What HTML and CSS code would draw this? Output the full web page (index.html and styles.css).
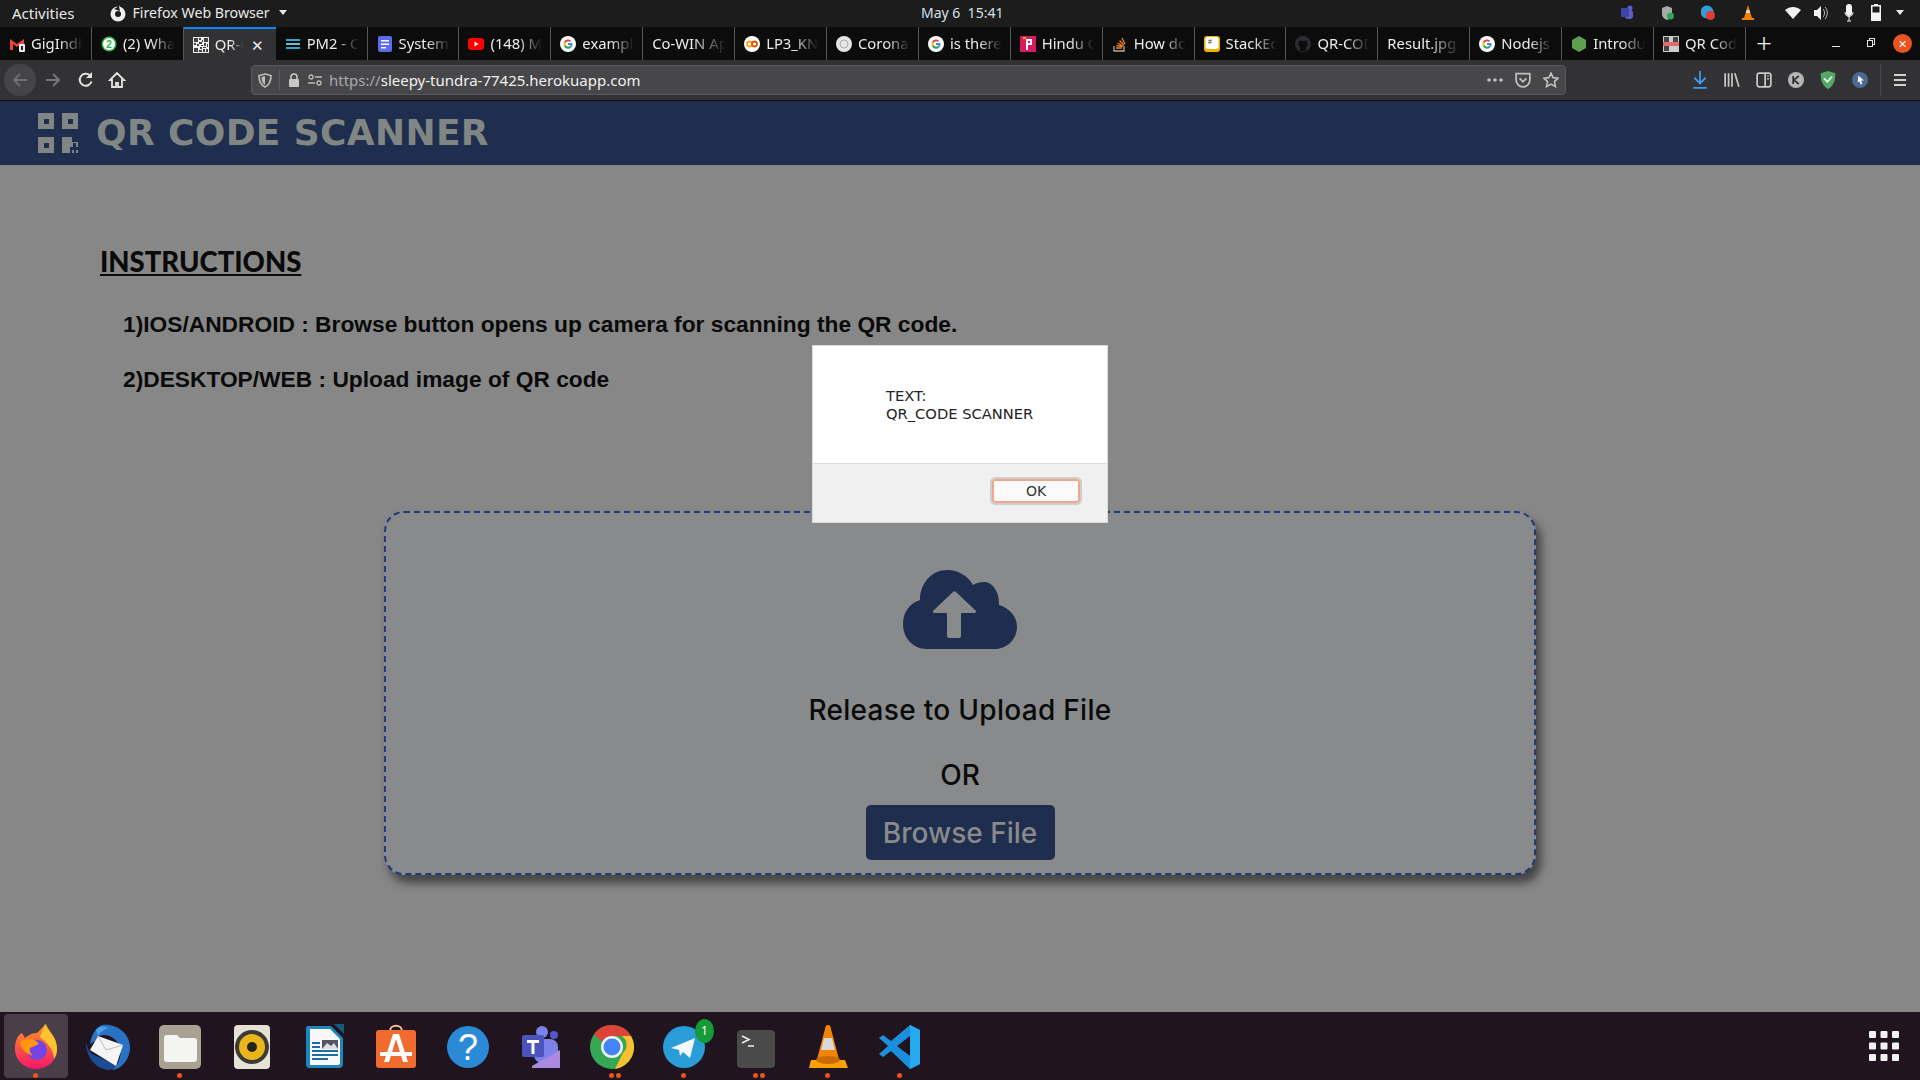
FILE: index.html
```html
<!DOCTYPE html>
<html lang="en">

<head>
    <meta charset="UTF-8">
    <title>QR Code Scanner</title>
    <link rel="stylesheet" href="styles.css">
</head>

<body>
    <div class="screen">
        <div class="topbar">
            <span class="activities">Activities</span>
            <span class="app-menu">
                <svg width="18" height="18" viewBox="0 0 18 18"><circle cx="9" cy="10" r="7.5" fill="#eee"/><circle cx="9" cy="10" r="3" fill="#1c1c1c"/><path d="M10 0c-1 3-3 4-5 5l6 2z" fill="#1c1c1c"/><path d="M10 1c1 2 2 3 4 4l-3 1z" fill="#eee"/></svg>
                Firefox Web Browser
                <i class="caret"></i>
            </span>
            <span class="clock">May 6&nbsp; 15:41</span>
            <span class="tray">
                <svg class="tray-teams" width="14" height="16" viewBox="0 0 14 16"><circle cx="10" cy="3" r="2.5" fill="#5b5fc7"/><rect x="5" y="5" width="8" height="9" rx="3" fill="#5b5fc7"/><rect x="1" y="3" width="8" height="9" rx="1" fill="#3f43a8"/></svg>
                <svg class="tray-shield" width="14" height="16" viewBox="0 0 14 16"><path d="M6 1l5 2v6c0 3-2 5-5 6-3-1-5-3-5-6V3z" fill="#a9a9a9"/><circle cx="9.5" cy="11" r="3.5" fill="#2ea44f"/></svg>
                <svg class="tray-tg" width="14" height="16" viewBox="0 0 14 16"><circle cx="6" cy="7" r="6.5" fill="#2f9ed8"/><circle cx="9.5" cy="10.5" r="4.5" fill="#e53935"/></svg>
                <svg class="tray-vlc" width="14" height="16" viewBox="0 0 14 16"><path d="M7 0l4 13H3z" fill="#f08000"/><path d="M1 13h12v2H1z" fill="#f08000"/><path d="M5.6 5h2.8l.7 3H4.9z" fill="#ddd"/></svg>
                <svg class="tray-wifi" width="18" height="14" viewBox="0 0 18 14"><path d="M1 4c5-4 11-4 16 0L9 13z" fill="#f2f2f2"/></svg>
                <svg class="tray-vol" width="14" height="14" viewBox="0 0 14 14"><path d="M0 4h3l4-4v14l-4-4H0z" fill="#f2f2f2"/><path d="M9 3c2 2 2 6 0 8M11 1c3 3 3 9 0 12" stroke="#bbb" fill="none"/></svg>
                <svg class="tray-mic" width="10" height="18" viewBox="0 0 10 18"><rect x="2" y="0" width="6" height="12" rx="3" fill="#f2f2f2"/><path d="M1 8c0 6 8 6 8 0M5 13v4M3 17h4" stroke="#f2f2f2" fill="none"/></svg>
                <svg class="tray-bat" width="10" height="17" viewBox="0 0 10 17"><path d="M3 0h4v1h3v16H0V1h3z" fill="#f2f2f2"/><rect x="1.5" y="2.5" width="7" height="6" fill="#1c1c1c"/></svg>
                <i class="caret"></i>
            </span>
        </div>

        <div class="tabs">
            <div class="tab"><svg class="fav" viewBox="0 0 16 16"><path d="M1 3l7 5 7-5v11h-3V8L8 11 4 8v6H1z" fill="#e8463a"/><rect x="10" y="8" width="6" height="8" rx="1" fill="#eee"/><rect x="12" y="10" width="2" height="4" fill="#222"/></svg><span class="tab-title">GigIndia</span></div>
            <div class="tab"><svg class="fav" viewBox="0 0 16 16"><circle cx="8" cy="8" r="7.5" fill="#2cb742"/><circle cx="8" cy="8" r="6" fill="#fff"/><text x="8" y="11.500" font-size="10" text-anchor="middle" fill="#2cb742" font-family="Liberation Sans" font-weight="bold">2</text></svg><span class="tab-title">(2) Wha</span></div>
            <div class="tab tab-active"><svg class="fav" viewBox="0 0 16 16"><rect width="16" height="16" fill="#eee"/><path d="M1 1h4v4H1zM11 1h4v4h-4zM1 11h4v4H1zM6 1h2v2H6zM9 3h1v2H9zM6 5h3v2H6zM1 6h2v2H1zM4 7h2v2H4zM8 8h2v1H8zM11 6h2v3h-2zM14 7h1v3h-1zM7 10h2v2H7zM10 10h3v1h-3zM6 13h3v2H6zM10 12h2v3h-2zM13 12h2v3h-2z" fill="#444"/></svg><span class="tab-title">QR-C</span><span class="tab-close">✕</span></div>
            <div class="tab"><svg class="fav" viewBox="0 0 16 16"><path d="M1 3h14v2H1z" fill="#2aa7c9"/><path d="M1 7h14v2H1z" fill="#7bb7c9"/><path d="M1 11h14v2H1z" fill="#2aa7c9"/></svg><span class="tab-title">PM2 - C</span></div>
            <div class="tab"><svg class="fav" viewBox="0 0 16 16"><rect x="1" width="14" height="16" rx="2" fill="#5c6bf0"/><path d="M4 4h8v1.500H4zM4 7.500h8V9H4zM4 11h5v1.500H4z" fill="#fff"/></svg><span class="tab-title">System</span></div>
            <div class="tab"><svg class="fav" viewBox="0 0 16 16"><rect y="2" width="16" height="12" rx="3" fill="#f00"/><path d="M6.500 5.500l4 2.500-4 2.500z" fill="#fff"/></svg><span class="tab-title">(148) M</span></div>
            <div class="tab"><svg class="fav" viewBox="0 0 16 16"><use href="#g-logo"/></svg><span class="tab-title">exampl</span></div>
            <div class="tab"><span class="tab-title">Co-WIN Ap</span></div>
            <div class="tab"><svg class="fav" viewBox="0 0 16 16"><circle cx="8" cy="8" r="8" fill="#fff"/><circle cx="5.500" cy="8" r="2.500" fill="none" stroke="#f9a825" stroke-width="1.800"/><circle cx="10.500" cy="8" r="2.500" fill="none" stroke="#e65100" stroke-width="1.800"/></svg><span class="tab-title">LP3_KN</span></div>
            <div class="tab"><svg class="fav" viewBox="0 0 16 16"><circle cx="8" cy="8" r="8" fill="#e6e6e6"/><circle cx="8" cy="8" r="4" fill="none" stroke="#aaa"/></svg><span class="tab-title">Corona</span></div>
            <div class="tab"><svg class="fav" viewBox="0 0 16 16"><use href="#g-logo"/></svg><span class="tab-title">is there</span></div>
            <div class="tab"><svg class="fav" viewBox="0 0 16 16"><rect width="16" height="16" fill="#d81b60"/><path d="M6 3h6v6H8v5H6z" fill="#fff"/><path d="M8 5h2v2H8z" fill="#d81b60"/><path d="M3 1h3v2H3z" fill="#f5b000"/></svg><span class="tab-title">Hindu C</span></div>
            <div class="tab"><svg class="fav" viewBox="0 0 16 16"><path d="M2 10v5h10v-5" fill="none" stroke="#aaa" stroke-width="1.300"/><path d="M4 12h6M4.500 9.500l6 1M5.500 7l5.500 3M7.500 4.500l4.500 4.500M10 2l3 6" stroke="#f47f24" stroke-width="1.300" fill="none"/></svg><span class="tab-title">How do</span></div>
            <div class="tab"><svg class="fav" viewBox="0 0 16 16"><rect width="16" height="16" rx="3" fill="#f5b000"/><rect x="1.500" y="1" width="13" height="12" rx="2" fill="#fff"/><text x="6" y="8" font-size="7" text-anchor="middle" fill="#333" font-family="Liberation Sans">#</text></svg><span class="tab-title">StackEc</span></div>
            <div class="tab"><svg class="fav" viewBox="0 0 16 16"><circle cx="8" cy="8" r="8" fill="#2a2d33"/><path d="M5 15v-4c-2-1-2-3-1-5V4l2 1h4l2-1v2c1 2 1 4-1 5v4z" fill="#0c0c0c"/></svg><span class="tab-title">QR-COD</span></div>
            <div class="tab"><span class="tab-title">Result.jpg</span></div>
            <div class="tab"><svg class="fav" viewBox="0 0 16 16"><use href="#g-logo"/></svg><span class="tab-title">Nodejs</span></div>
            <div class="tab"><svg class="fav" viewBox="0 0 16 16"><path d="M8 0l7 4v8l-7 4-7-4V4z" fill="#5fa04e"/></svg><span class="tab-title">Introdu</span></div>
            <div class="tab"><svg class="fav" viewBox="0 0 16 16"><rect width="16" height="16" fill="#ccc"/><path d="M1 1h5v5H1zM10 1h5v5h-5zM1 10h5v5H1z" fill="#444"/><rect y="6" width="16" height="4" fill="#e26a6a"/></svg><span class="tab-title">QR Cod</span></div>
            <span class="tab-new">+</span>
            <span class="win-buttons">
                <i class="win-min"></i>
                <i class="win-max"></i>
                <span class="win-close">✕</span>
            </span>
        </div>

        <div class="toolbar">
            <span class="nav-back"><svg width="18" height="18" viewBox="0 0 18 18"><path d="M16 9H3M9 3L3 9l6 6" fill="none" stroke="#6f6f71" stroke-width="2"/></svg></span>
            <svg class="nav-fwd" width="18" height="18" viewBox="0 0 18 18"><path d="M2 9h13M9 3l6 6-6 6" fill="none" stroke="#77777a" stroke-width="2"/></svg>
            <svg class="nav-reload" width="18" height="18" viewBox="0 0 18 18"><path d="M14.500 10.500A6 6 0 1 1 13 4.500" fill="none" stroke="#e2e2e2" stroke-width="2"/><path d="M15 1v6H9z" fill="#e2e2e2"/></svg>
            <svg class="nav-home" width="18" height="18" viewBox="0 0 18 18"><path d="M9 2L2 9h2v7h4v-4h2v4h4V9h2z" fill="none" stroke="#e2e2e2" stroke-width="1.800"/></svg>
            <div class="urlbar">
                <svg class="url-shield" width="14" height="15" viewBox="0 0 14 15"><path d="M7 1l6 1.500c0 6-1.500 9.500-6 11.500C2.500 12 1 8.500 1 2.500z" fill="none" stroke="#bdbdbd" stroke-width="1.600"/><path d="M7 3v9c-2-1-3.500-4-3.500-8z" fill="#bdbdbd"/></svg>
                <i class="url-sep"></i>
                <svg width="12" height="14" viewBox="0 0 12 14"><path d="M3 6V4a3 3 0 0 1 6 0v2" fill="none" stroke="#c8c8c8" stroke-width="1.600"/><rect x="1" y="6" width="10" height="8" rx="1" fill="#c8c8c8"/></svg>
                <svg class="url-perm" width="14" height="12" viewBox="0 0 14 12"><circle cx="3" cy="3" r="2" fill="none" stroke="#bdbdbd" stroke-width="1.300"/><path d="M7 3h7M0 9h7" stroke="#bdbdbd" stroke-width="1.500"/><circle cx="11" cy="9" r="2" fill="none" stroke="#bdbdbd" stroke-width="1.300"/></svg>
                <span class="url-text"><span class="url-dim">https://</span>sleepy-tundra-77425.herokuapp.com</span>
                <span class="url-actions">
                    <svg width="16" height="4" viewBox="0 0 16 4"><circle cx="2" cy="2" r="1.800" fill="#c0c0c0"/><circle cx="8" cy="2" r="1.800" fill="#c0c0c0"/><circle cx="14" cy="2" r="1.800" fill="#c0c0c0"/></svg>
                    <svg width="16" height="16" viewBox="0 0 14 14"><path d="M1 1.500h12V7a6 6 0 0 1-12 0z" fill="none" stroke="#c0c0c0" stroke-width="1.500"/><path d="M4 5.500l3 3 3-3" fill="none" stroke="#c0c0c0" stroke-width="1.500"/></svg>
                    <svg width="16" height="16" viewBox="0 0 15 15"><path d="M7.500 1l2 4.300 4.700.5-3.500 3.200 1 4.700-4.200-2.400-4.200 2.400 1-4.700L.8 5.800l4.700-.5z" fill="none" stroke="#c0c0c0" stroke-width="1.500"/></svg>
                </span>
            </div>
            <div class="tool-icons">
                <svg width="16" height="18" viewBox="0 0 14 16"><path d="M7 0v11M2 6l5 5 5-5M1 15h12" fill="none" stroke="#3d9bf0" stroke-width="1.600"/></svg>
                <svg width="16" height="16" viewBox="0 0 14 14"><path d="M1 1v12M4 1v12M7 1v12M9.500 1l3.500 12" stroke="#c8c8c8" stroke-width="1.500" fill="none"/></svg>
                <svg width="16" height="16" viewBox="0 0 14 14"><rect x="1" y="1" width="12" height="12" rx="2" fill="none" stroke="#c8c8c8" stroke-width="1.500"/><path d="M8 1v12" stroke="#c8c8c8" stroke-width="1.500"/><path d="M9.500 3.500h2M9.500 6h2" stroke="#c8c8c8"/></svg>
                <svg width="16" height="16" viewBox="0 0 14 14"><circle cx="7" cy="7" r="7" fill="#b5b5b5"/><path d="M4.500 3.500v7M9.500 3.500L5 7l4.500 3.500" stroke="#333" stroke-width="1.500" fill="none"/></svg>
                <svg width="16" height="18" viewBox="0 0 14 16"><path d="M7 0l6.500 2c0 7-1.500 11-6.500 14C2 13 .5 9 .5 2z" fill="#56a868"/><path d="M3.500 6.500l3 3 4-4.500" stroke="#e6f5e6" stroke-width="1.500" fill="none"/></svg>
                <svg width="16" height="16" viewBox="0 0 14 14"><circle cx="7" cy="7" r="7" fill="#4a6a94"/><path d="M5.500 3l5 4.500H8l1 3-1.500.500L6.500 8 5 9.500z" fill="#fff"/></svg>
                <i class="tool-sep"></i>
                <svg class="tool-menu" width="14" height="14" viewBox="0 0 14 14"><path d="M1 2h12M1 7h12M1 12h12" stroke="#d0d0d0" stroke-width="2"/></svg>
            </div>
        </div>

        <header class="app-header">
            <svg class="app-logo" width="40" height="40" viewBox="0 0 40 40">
                <path fill-rule="evenodd" fill="#7f8683" d="M0 0h16v16H0zM6 6v5h5V6zM24 0h16v16H24zM30 6v5h5V6zM0 24h16v16H0zM6 30v5h5v-5zM24 24h10v5h6v5h-2v-4h-3v4h-3v6h-8zM38 37h2v3h-2zM34 37h2v3h-2z"/>
            </svg>
            <h1>QR CODE SCANNER</h1>
        </header>

        <main class="content">
            <h2>INSTRUCTIONS</h2>
            <p class="step step-first">1)IOS/ANDROID : Browse button opens up camera for scanning the QR code.</p>
            <p class="step">2)DESKTOP/WEB : Upload image of QR code</p>

            <div class="dropzone">
                <svg class="cloud" width="114" height="79" viewBox="0 0 114 79">
                    <path fill="#1f2e4e" d="M24 79C10 79 0 68 0 54c0-12 7-21 17-24C17 13 29 0 44 0c11 0 21 6 26 15 3-2 7-3 11-3 9 0 15 10 15 21v2c10 3 18 11 18 22 0 12-10 22-22 22z"/>
                    <path fill="#888a8b" d="M46 68c-1 0-2-1-2-2V43H32c-2 0-3-2-1-3l19-18c1-1 2-1 3 0l19 18c2 1 1 3-1 3H58v23c0 1-1 2-2 2z"/>
                </svg>
                <p class="drop-title">Release to Upload File</p>
                <p class="drop-or">OR</p>
                <button class="browse">Browse File</button>
            </div>
        </main>

        <div class="dock">
            <div class="dock-item dock-active"><svg viewBox="0 0 48 48"><defs><linearGradient id="ff-body" x1="0" y1="0" x2="0" y2="1"><stop offset="0" stop-color="#ff9a1f"/><stop offset="1" stop-color="#f5156c"/></linearGradient></defs><path d="M3 27C3 18 6 13 10 11l3 5c3-3 7-5 12-5l9-9c2 7 11 12 11 25 0 11-9 20-21 20S3 38 3 27z" fill="url(#ff-body)"/><path d="M33 2c2 7 12 12 12 25 0 4-1 7-3 10 0-10-8-17-14-22z" fill="#ffc42e"/><circle cx="25" cy="28" r="10" fill="#7542e5"/><path d="M8 20c6-5 15-4 19 2l-9 4c-1 3 1 6 3 8-7-2-13-8-13-14z" fill="#ff980e"/></svg><i class="dot"></i></div>
            <div class="dock-item"><svg viewBox="0 0 48 48"><path d="M18 3c14-2 28 8 28 22 0 12-8 22-18 23 6-5 10-13 8-22-2-8-9-13-16-13-5 0-8 3-9 6l-5 3c1-8 5-16 12-19z" fill="#2a72c4"/><path d="M2 20c0 14 8 26 22 28 4 0 7-2 9-5L8 32c-3-3-5-7-6-12z" fill="#1a4c94"/><path d="M6 28l8-14 25 9-7 21z" fill="#f5f5f5"/><path d="M14 14l8 14 17-5" fill="none" stroke="#bbb"/><path d="M12 8c3-4 8-4 12-2-3 1-8 4-10 8z" fill="#4aa3e8"/></svg></div>
            <div class="dock-item"><svg viewBox="0 0 48 48"><rect x="3" y="3" width="42" height="44" rx="5" fill="#a8a292"/><path d="M8 16c0-2 1-3 3-3h10l3 3h14c2 0 3 1 3 3v18c0 2-1 3-3 3H11c-2 0-3-1-3-3z" fill="#f4f4f2"/></svg><i class="dot"></i></div>
            <div class="dock-item"><svg viewBox="0 0 48 48"><rect x="6" y="3" width="36" height="44" rx="4" fill="#e6e2d6"/><circle cx="24" cy="25" r="17" fill="#3a3a36"/><circle cx="24" cy="25" r="13" fill="#eab51a"/><circle cx="24" cy="25" r="5" fill="#222"/></svg></div>
            <div class="dock-item"><svg viewBox="0 0 48 48"><path d="M7 4h24l12 12v26c0 2-1 4-4 4H9c-2 0-3-2-3-4V6z" fill="#1c87b8"/><path d="M10 7h20l10 10v24c0 1-1 2-2 2H10z" fill="#f8f8f8"/><path d="M34 2l10 0v10z" fill="#125a80"/><path d="M12 20h8v2h-8zM12 24h8v2h-8zM12 28h26v2H12zM12 32h26v2H12zM12 36h16v2H12z" fill="#1a6fa0"/><rect x="22" y="18" width="16" height="9" fill="#556"/><path d="M22 27l5-6 4 3 3-3 4 6z" fill="#ddd"/></svg></div>
            <div class="dock-item"><svg viewBox="0 0 48 48"><path d="M18 9c0-7 12-7 12 0" fill="none" stroke="#f0c090" stroke-width="2"/><rect x="4" y="8" width="40" height="38" rx="3" fill="#f26b2e"/><path d="M21 12h6l9 28h-5l-7-23-7 23h-5z" fill="#fff"/><path d="M8 30h32v4H8z" fill="#fff"/></svg></div>
            <div class="dock-item"><svg viewBox="0 0 48 48"><circle cx="24" cy="25" r="21" fill="#2a8ad6"/><text x="24" y="38" font-size="36" text-anchor="middle" fill="#fff" font-family="Liberation Sans">?</text></svg></div>
            <div class="dock-item"><svg viewBox="0 0 48 48"><circle cx="26" cy="10" r="6" fill="#7b83eb"/><circle cx="38" cy="13" r="4" fill="#5059c9"/><rect x="18" y="17" width="24" height="24" rx="8" fill="#7b83eb"/><rect x="6" y="13" width="22" height="22" rx="2" fill="#4b53bc"/><path d="M11 18h12v3h-4.500v11h-3V21H11z" fill="#fff"/><path d="M16 44l28-16v18H16z" fill="#a98ae0"/></svg></div>
            <div class="dock-item"><svg viewBox="0 0 48 48"><circle cx="24" cy="25" r="22" fill="#34a853"/><path d="M24 3a22 22 0 0 1 19 11H24a11 11 0 0 0-10 6L6 12A22 22 0 0 1 24 3z" fill="#db4437"/><path d="M43 14a22 22 0 0 1-16 33l8-16a11 11 0 0 0-1-17z" fill="#fbc02d"/><circle cx="24" cy="25" r="11" fill="#f2f2f2"/><circle cx="24" cy="25" r="8.500" fill="#4285f4"/></svg><i class="dot"></i><i class="dot dot-2"></i></div>
            <div class="dock-item"><svg viewBox="0 0 48 48"><circle cx="24" cy="25" r="21" fill="#2a9dd8"/><path d="M11 26l24-10-5 20-7-6-3 4-1-6z" fill="#f2f8fc"/></svg><span class="dock-badge">1</span><i class="dot"></i></div>
            <div class="dock-item"><svg viewBox="0 0 48 48"><rect x="5" y="8" width="38" height="38" rx="4" fill="#4a4a4a"/><path d="M10 14l7 3.500-7 3.500M16 24h6" stroke="#eee" fill="none" stroke-width="1.600"/></svg><i class="dot"></i><i class="dot dot-2"></i></div>
            <div class="dock-item"><svg viewBox="0 0 48 48"><path d="M24 3c2 0 3 2 3 4l9 34H12l9-34c0-2 1-4 3-4z" fill="#f28500"/><path d="M20 16h8l3 12H17z" fill="#d8d8d8"/><path d="M7 38h34l3 8H5z" fill="#f8a000"/><ellipse cx="24" cy="38" rx="12" ry="4" fill="#c96a00"/></svg><i class="dot"></i></div>
            <div class="dock-item"><svg viewBox="0 0 48 48"><path d="M34 3l10 5v34l-10 5L15 29l-8 6-4-3 9-8-9-8 4-3 8 6z" fill="#1a8fdd"/><path d="M34 14v20L21 24z" fill="#20141f"/><path d="M34 3l10 5v34l-10 5z" fill="#27a9f0"/></svg><i class="dot"></i></div>
            <svg class="dock-grid" width="30" height="30" viewBox="0 0 30 30"><g fill="#f2f2f2"><rect width="7" height="7" rx="1"/><rect x="11.500" width="7" height="7" rx="1"/><rect x="23" width="7" height="7" rx="1"/><rect y="11.500" width="7" height="7" rx="1"/><rect x="11.500" y="11.500" width="7" height="7" rx="1"/><rect x="23" y="11.500" width="7" height="7" rx="1"/><rect y="23" width="7" height="7" rx="1"/><rect x="11.500" y="23" width="7" height="7" rx="1"/><rect x="23" y="23" width="7" height="7" rx="1"/></g></svg>
        </div>

        <div class="alert">
            <div class="alert-body">TEXT:<br>QR_CODE SCANNER</div>
            <div class="alert-foot"><button class="alert-ok">OK</button></div>
        </div>

        <svg class="defs" width="0" height="0"><symbol id="g-logo" viewBox="0 0 16 16"><circle cx="8" cy="8" r="8" fill="#fff"/><path d="M8 3.500a4.500 4.500 0 0 1 3 1.200L9.800 6A2.700 2.700 0 0 0 5.600 7L4 5.700A4.500 4.500 0 0 1 8 3.500z" fill="#ea4335"/><path d="M4 5.700L5.600 7a2.900 2.900 0 0 0 0 2L4 10.300a4.500 4.500 0 0 1 0-4.600z" fill="#fbbc05"/><path d="M4 10.300L5.600 9a2.700 2.700 0 0 0 4.300 1l1.500 1.300A4.500 4.500 0 0 1 4 10.300z" fill="#34a853"/><path d="M12.500 7H8v2h2.500a2 2 0 0 1-.6 1l1.500 1.300A4.500 4.500 0 0 0 12.500 7z" fill="#4285f4"/></symbol></svg>
    </div>
</body>

</html>
```

FILE: styles.css
```css
* {
    margin: 0;
    padding: 0;
    box-sizing: border-box;
}

body {
    overflow: hidden;
    font-family: "Noto Sans", sans-serif;
}

.screen {
    position: relative;
    width: 1920px;
    height: 1080px;
    display: flex;
    flex-direction: column;
    background-color: #878787;
}

/* ubuntu top bar */
.topbar {
    position: relative;
    height: 27px;
    display: flex;
    align-items: center;
    padding: 0 0 2px 12px;
    background-color: #1c1c1c;
    color: #e8e8e8;
    font-size: 14.2px;
}

.activities { font-size: 15px; }

.app-menu {
    display: flex;
    align-items: center;
    gap: 6px;
    margin-left: 34px;
}

.caret {
    display: block;
    width: 0;
    height: 0;
    margin-left: 3px;
    border-left: 4.5px solid transparent;
    border-right: 4.5px solid transparent;
    border-top: 5px solid #e8e8e8;
}

.clock {
    position: absolute;
    left: 921px;
    top: 3px;
    color: #d5e0ea;
    font-size: 14px;
}

.tray {
    margin-left: auto;
    display: flex;
    align-items: center;
    padding-right: 16px;
}

.tray-teams { margin-right: 27px; }
.tray-shield { margin-right: 26px; }
.tray-tg { margin-right: 26px; }
.tray-vlc { margin-right: 29px; }
.tray-wifi { margin-right: 12px; }
.tray-vol { margin-right: 16px; }
.tray-mic { margin-right: 17px; }
.tray-bat { margin-right: 12px; }

/* firefox tabs */
.tabs {
    height: 33px;
    display: flex;
    align-items: stretch;
    background-color: #0c0c0c;
    color: #ececec;
    font-size: 14.8px;
}

.tab {
    width: 91.9px;
    flex-shrink: 0;
    display: flex;
    align-items: center;
    gap: 6px;
    padding-left: 9px;
    border-right: 1px solid #55555a;
    overflow: hidden;
}

.tab-active {
    border-right: 0;
    border-top: 2px solid #0a84ff;
    background-color: #323234;
}

.fav {
    width: 16px;
    height: 16px;
    flex-shrink: 0;
}

.tab-title {
    flex: 1;
    min-width: 0;
    margin: -2px 8px 0 0;
    white-space: nowrap;
    overflow: hidden;
    -webkit-mask-image: linear-gradient(to right, #000 55%, transparent 100%);
    mask-image: linear-gradient(to right, #000 55%, transparent 100%);
}

.tab-active .tab-title {
    margin-right: 2px;
}

.tab-close {
    margin-right: 12px;
    font-size: 15px;
}

.tab-new {
    margin-left: 10px;
    font-size: 28px;
    line-height: 30px;
    font-weight: 300;
}

.win-buttons {
    margin-left: auto;
    display: flex;
    align-items: center;
    padding-right: 8px;
}

.win-min {
    width: 8px;
    height: 1px;
    margin-top: 5px;
    background-color: #e6e6e6;
}

.win-max {
    width: 6px;
    height: 7px;
    margin-left: 27px;
    border: 1px solid #e6e6e6;
    box-shadow: 2px -2px 0 -1px #0c0c0c, 2px -2px 0 0 #e6e6e6;
}

.win-close {
    width: 19px;
    height: 19px;
    margin-left: 20px;
    border-radius: 50%;
    background-color: #e95420;
    color: #fff;
    font-size: 11px;
    line-height: 19px;
    text-align: center;
}

/* firefox nav bar */
.toolbar {
    height: 41px;
    display: flex;
    align-items: center;
    padding-left: 4px;
    background-color: #323234;
    border-bottom: 1px solid #0c0c0c;
}

.nav-back {
    width: 32px;
    height: 32px;
    display: flex;
    align-items: center;
    justify-content: center;
    border-radius: 50%;
    background-color: #454547;
}

.nav-fwd { margin-left: 8px; }
.nav-reload { margin-left: 15px; }
.nav-home { margin-left: 13px; }

.urlbar {
    width: 1315px;
    height: 30px;
    margin-left: 125px;
    display: flex;
    align-items: center;
    padding-left: 6px;
    border: 1px solid #5a5a5c;
    border-radius: 4px;
    background-color: #474749;
    color: #f0f0f0;
    font-size: 15px;
}

.url-sep {
    width: 1px;
    height: 20px;
    margin: 0 8px 0 7px;
    background-color: #5f5f61;
}

.url-perm { margin-left: 8px; }

.url-text { margin-left: 7px; }

.url-dim { color: #a9a9ab; }

.url-actions {
    margin-left: auto;
    display: flex;
    align-items: center;
    gap: 12px;
    padding-right: 6px;
}

.tool-icons {
    flex: 1;
    display: flex;
    align-items: center;
    gap: 16px;
    padding-left: 126px;
}

.tool-sep {
    width: 1px;
    height: 32px;
    margin-left: -4px;
    background-color: #4a4a4c;
}

.tool-menu { margin-left: -4px; }

/* the page itself, dimmed behind the alert */
.app-header {
    height: 64px;
    display: flex;
    align-items: center;
    padding-left: 38px;
    background-color: #1f2e4e;
}

.app-logo { margin-right: 18px; }

.app-header h1 {
    margin-top: -2px;
    color: #7f8683;
    font-family: "DejaVu Sans", sans-serif;
    font-size: 36px;
    font-weight: 700;
    letter-spacing: 0.35px;
}

.content {
    flex: 1;
    min-height: 0;
    padding: 79px 0 0 100px;
    color: #0a0a0a;
}

.content h2 {
    font-family: "Lato", sans-serif;
    font-size: 27.5px;
    font-weight: 900;
    line-height: 36px;
    text-decoration: underline;
}

.step {
    margin: 23px 0 0 23px;
    font-family: "Liberation Sans", sans-serif;
    font-size: 22.75px;
    font-weight: 700;
    line-height: 32px;
}

.step-first { margin-top: 28px; }

.dropzone {
    width: 1152px;
    height: 364px;
    margin: 116px 0 0 284px;
    display: flex;
    flex-direction: column;
    align-items: center;
    padding-top: 57px;
    border: 2px dashed #1f3a7a;
    border-radius: 20px;
    background-color: #888a8b;
    box-shadow: 5px 8px 10px rgba(0, 0, 0, 0.5);
    font-family: "Inter", sans-serif;
    font-weight: 500;
}

.drop-title {
    margin-top: 44px;
    font-size: 28px;
    letter-spacing: 0.3px;
}

.drop-or {
    margin-top: 31px;
    font-size: 28px;
}

.browse {
    width: 189px;
    height: 55px;
    margin-top: 13px;
    border: 0;
    border-radius: 5px;
    background-color: #1f2e4e;
    color: #888a8b;
    font-family: "Inter", sans-serif;
    font-size: 28px;
    font-weight: 500;
}

/* ubuntu dock */
.dock {
    height: 68px;
    display: flex;
    align-items: center;
    padding-left: 4px;
    background-color: #20141f;
}

.dock-item {
    position: relative;
    width: 64px;
    height: 64px;
    margin-right: 8px;
    display: flex;
    align-items: center;
    justify-content: center;
    border-radius: 4px;
}

.dock-item svg {
    width: 48px;
    height: 48px;
}

.dock-active { background-color: #4a3f49; }

.dot {
    position: absolute;
    left: 29px;
    bottom: 0;
    width: 5px;
    height: 5px;
    border-radius: 50%;
    background-color: #e95420;
}

.dot-2 { left: 36px; }

.dock-badge {
    position: absolute;
    top: 5px;
    right: 2px;
    width: 19px;
    height: 24px;
    border-radius: 50%;
    background-color: #149a36;
    color: #fff;
    font-size: 12px;
    line-height: 24px;
    text-align: center;
}

.dock-grid {
    margin-left: auto;
    margin-right: 21px;
}

/* js alert, sits over the page */
.alert {
    position: absolute;
    left: 812px;
    top: 345px;
    width: 296px;
    height: 178px;
    display: flex;
    flex-direction: column;
    border: 1px solid #dcdcdc;
    background-color: #fff;
}

.alert-body {
    height: 118px;
    padding: 41px 0 0 73px;
    border-bottom: 1px solid #dcdcdc;
    color: #222;
    font-family: "DejaVu Sans", sans-serif;
    font-size: 14.7px;
    line-height: 18px;
}

.alert-foot {
    flex: 1;
    display: flex;
    align-items: flex-start;
    justify-content: flex-end;
    padding: 15px 27px 0 0;
    background-color: #f0f0f0;
}

.alert-ok {
    width: 88px;
    height: 24px;
    border: 2px solid #f2a58c;
    outline: 2px solid #cfcfcf;
    border-radius: 3px;
    background-color: #fbfbfb;
    color: #333;
    font-family: "DejaVu Sans", sans-serif;
    font-size: 14px;
}

.defs {
    position: absolute;
}
```
